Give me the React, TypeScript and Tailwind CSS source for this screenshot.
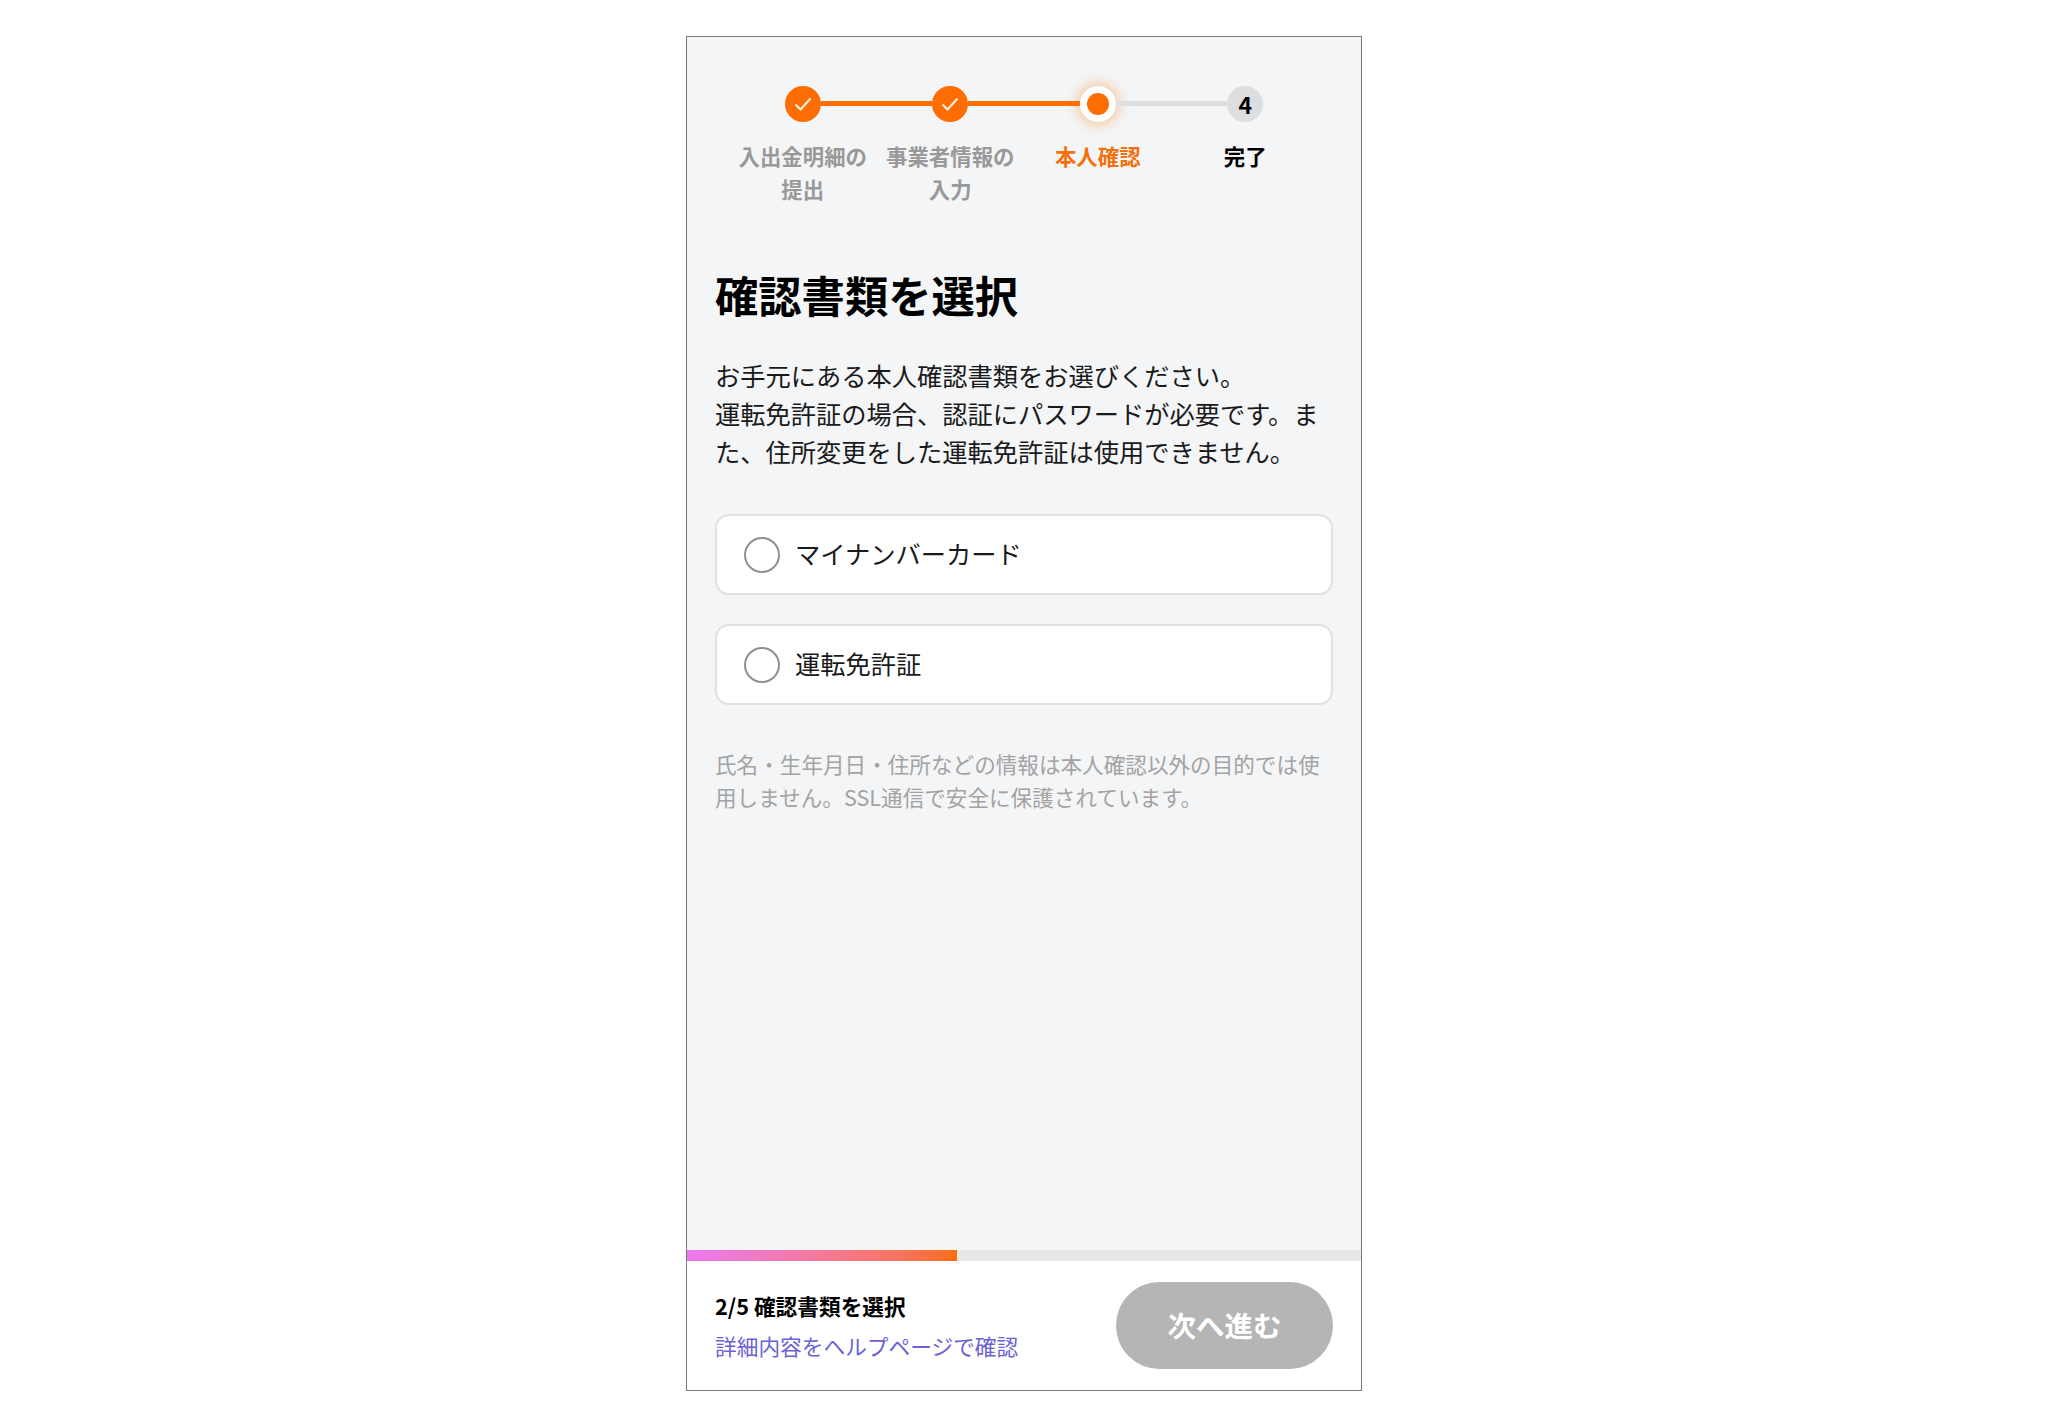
const STEPS = [
  { label: '入出金明細の', label2: '提出', state: 'done' },
  { label: '事業者情報の', label2: '入力', state: 'done' },
  { label: '本人確認', label2: '', state: 'active' },
  { label: '完了', label2: '', state: 'todo' },
]

const OPTIONS = ['マイナンバーカード', '運転免許証']

function StepIcon({ state }: { state: string }) {
  if (state === 'done') {
    return (
      <div className="w-9 h-9 shrink-0 rounded-full bg-[#ff6d00] flex items-center justify-center">
        <svg width="18" height="14" viewBox="0 0 18 14" fill="none">
          <path d="M1.5 7.5L6.5 12.5L16.5 1.5" stroke="#fff3e6" strokeWidth="2" />
        </svg>
      </div>
    )
  }
  if (state === 'active') {
    return (
      <div className="w-9 h-9 shrink-0 rounded-full bg-white shadow-[0_0_12px_3px_rgba(255,130,20,0.4)] flex items-center justify-center">
        <div className="w-[22px] h-[22px] rounded-full bg-[#ff6d00]" />
      </div>
    )
  }
  return (
    <div className="w-9 h-9 shrink-0 rounded-full bg-[#dcdee0] flex items-center justify-center text-[23px] font-bold text-black">
      4
    </div>
  )
}

export default function App() {
  return (
    <div className="min-h-[1427px] bg-white pt-[36px] font-['Noto_Sans_CJK_JP',sans-serif]">
      <div className="mx-auto w-[676px] h-[1355px] border border-[#7a7a7a] bg-[#f3f5f7] flex flex-col">
        <div className="flex-1 px-[28px] pt-[49px]">
          {/* stepper */}
          <div className="ml-[14px] w-[590px] grid grid-cols-4">
            {STEPS.map((s, i) => (
              <div key={s.label} className="flex flex-col items-center">
                <div className="w-full flex items-center">
                  <div className={`flex-1 h-[5px] -mt-[1px] ${i === 0 ? '' : i < 3 ? 'bg-[#ff6d00]' : 'bg-[#dcdee0]'}`} />
                  <StepIcon state={s.state} />
                  <div className={`flex-1 h-[5px] -mt-[1px] ${i === 3 ? '' : i < 2 ? 'bg-[#ff6d00]' : 'bg-[#dcdee0]'}`} />
                </div>
                <div
                  className={`mt-[17px] h-[66px] text-[21.4px] leading-[33px] font-bold text-center whitespace-nowrap ${
                    s.state === 'done' ? 'text-[#999999]' : s.state === 'active' ? 'text-[#f56f0c]' : 'text-black'
                  }`}
                >
                  {s.label}
                  {s.label2 && <br />}
                  {s.label2}
                </div>
              </div>
            ))}
          </div>

          <h1 className="mt-[59px] text-[43.3px] leading-[60px] font-bold text-black">確認書類を選択</h1>

          <p className="mt-[32px] text-[25.25px] leading-[38px] text-[#1a1a1a] whitespace-nowrap">
            お手元にある本人確認書類をお選びください。
            <br />
            運転免許証の場合、認証にパスワードが必要です。ま
            <br />
            た、住所変更をした運転免許証は使用できません。
          </p>

          <div className="mt-[44px] flex flex-col gap-[29px]">
            {OPTIONS.map((o) => (
              <div
                key={o}
                className="h-[81px] rounded-[14px] bg-white border-2 border-[#dfe1e3] pl-[27px] flex items-center gap-[15px]"
              >
                <div className="w-9 h-9 rounded-full border-2 border-[#909090] bg-white" />
                <span className="text-[25.25px] leading-none text-[#1a1a1a] -mt-[1px]">{o}</span>
              </div>
            ))}
          </div>

          <p className="mt-[42px] text-[21.6px] leading-[33px] text-[#a3a3a3] whitespace-nowrap">
            氏名・生年月日・住所などの情報は本人確認以外の目的では使
            <br />
            用しません。SSL通信で安全に保護されています。
          </p>
        </div>

        {/* progress */}
        <div className="h-[11px] bg-[#e8e8e8]">
          <div className="h-full w-[40%] bg-gradient-to-r from-[#ec78f0] to-[#ff6d00]" />
        </div>

        {/* footer */}
        <div className="h-[129px] bg-white pl-[28px] pr-[28px] flex items-center justify-between">
          <div>
            <div className="text-[21.7px] leading-[33px] font-bold text-black">2/5 確認書類を選択</div>
            <a className="block mt-[7px] text-[21.7px] leading-[33px] text-[#6a62d4]">詳細内容をヘルプページで確認</a>
          </div>
          <button className="w-[217px] h-[87px] rounded-full bg-[#b5b5b5] text-white text-[28.5px] font-bold">
            次へ進む
          </button>
        </div>
      </div>
    </div>
  )
}
